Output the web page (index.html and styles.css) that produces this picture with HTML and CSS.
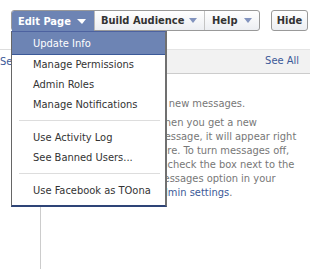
FILE: index.html
```html
<!DOCTYPE html>
<html lang="en">
<head>
    <meta charset="UTF-8">
    <title>Page admin</title>
    <link rel="stylesheet" href="styles.css">
</head>
<body>

<div class="page">
    <!-- Barra de botoes -->
    <div class="toolbar">
        <div class="btn-group">
            <div class="menu-wrap">
                <button class="btn btn-edit">Edit Page <span class="arrow arrow-white"></span></button>
                <ul class="menu">
                    <li class="menu-item selected">Update Info</li>
                    <li class="menu-item">Manage Permissions</li>
                    <li class="menu-item">Admin Roles</li>
                    <li class="menu-item">Manage Notifications</li>
                    <li class="menu-sep"></li>
                    <li class="menu-item">Use Activity Log</li>
                    <li class="menu-item">See Banned Users...</li>
                    <li class="menu-sep"></li>
                    <li class="menu-item">Use Facebook as TOona</li>
                </ul>
            </div>
            <button class="btn btn-build">Build Audience <span class="arrow"></span></button>
            <button class="btn btn-help">Help <span class="arrow"></span></button>
        </div>
        <button class="btn btn-hide">Hide</button>
    </div>

    <!-- Conteudo por baixo do menu -->
    <div class="content">
        <div class="side">
            <div class="side-bar">See All</div>
        </div>
        <div class="main">
            <div class="main-bar"><a href="#">See All</a></div>
            <p class="empty">You have no new messages.</p>
            <p class="help">When you get a new<br>message, it will appear right<br>here. To turn messages off,<br>uncheck the box next to the<br>Messages option in your<br><a href="#">Admin settings</a>.</p>
        </div>
    </div>
</div>

</body>
</html>
```

FILE: styles.css
```css
body {
    margin: 0;
    font-family: "DejaVu Sans Condensed", "Liberation Sans", sans-serif;
    font-size: 11px;
    color: #333333;
    background: #FFFFFF;
}
.page {
    width: 327px;
    height: 269px;
    overflow: hidden;
}
.toolbar {
    display: flex;
    padding: 10px 0 0 11px;
}
.btn-group {
    display: flex;
    height: 19px;
    border: 1px solid #999999;
    border-radius: 3px;
    background: linear-gradient(#FFFFFF, #ECEEF2);
}
.btn {
    display: flex;
    align-items: center;
    height: 19px;
    margin: 0;
    padding: 0 7px 0 6px;
    border: none;
    background: transparent;
    font-family: inherit;
    font-size: 11px;
    font-weight: bold;
    color: #333333;
    cursor: pointer;
}
.arrow {
    width: 0;
    height: 0;
    margin-left: auto;
    border-left: 4px solid transparent;
    border-right: 4px solid transparent;
    border-top: 5px solid #8293BE;
}
.arrow-white {
    border-top-color: #FFFFFF;
    border-left-width: 5px;
}
.menu-wrap {
    position: relative;
}
.btn-edit {
    width: 82px;
    height: 20px;
    padding-right: 8px;
    background: #6D84B4;
    color: #FFFFFF;
    border-radius: 2px 0 0 0;
}
.btn-build {
    width: 110px;
    border-left: 1px solid #BBBBBB;
}
.btn-help {
    width: 55px;
    border-left: 1px solid #C4C4C4;
    padding-left: 7px;
}
.btn-hide {
    width: 37px;
    height: 21px;
    margin-left: 11px;
    padding: 0;
    justify-content: center;
    border: 1px solid #999999;
    border-radius: 3px;
    background: linear-gradient(#FFFFFF, #ECEEF2);
}

/* Menu suspenso */
.menu {
    position: absolute;
    top: 20px;
    left: -1px;
    z-index: 2;
    width: 153px;
    margin: 0;
    padding: 0 0 4px 0;
    list-style: none;
    background: #FFFFFF;
    border-top: 1px solid #4D62A0;
    border-left: 1px solid #666666;
    border-right: 2px solid #707070;
    border-bottom: 2px solid #2E4477;
}
.menu-item {
    padding-left: 21px;
    line-height: 20px;
    color: #333333;
    white-space: nowrap;
}
.menu-item.selected {
    padding-top: 2px;
    background: #6D84B4;
    color: #FFFFFF;
    border-bottom: 1px solid #3B5998;
}
.menu-sep {
    height: 1px;
    margin: 5px 5px 7px 7px;
    background: #DDDDDD;
}

/* Conteudo */
.content {
    display: flex;
    margin-top: 18px;
}
.side {
    width: 40px;
}
.side-bar {
    height: 23px;
    line-height: 23px;
    border-top: 1px solid #DDDDDD;
    color: #3B5998;
}
.main {
    width: 269px;
    height: 220px;
    border-left: 1px solid #CCCCCC;
    color: #777777;
    line-height: 14px;
}
.main-bar {
    height: 23px;
    padding-right: 11px;
    line-height: 22px;
    text-align: right;
    background: #F2F2F2;
    border-top: 1px solid #E4E4E4;
    border-bottom: 1px solid #CCCCCC;
    margin-bottom: 23px;
}
.main-bar a,
.help a {
    color: #3B5998;
    text-decoration: none;
}
.empty {
    margin: 0 0 5px 0;
    text-align: center;
}
.help {
    margin: 0;
    padding-left: 114px;
}
```
